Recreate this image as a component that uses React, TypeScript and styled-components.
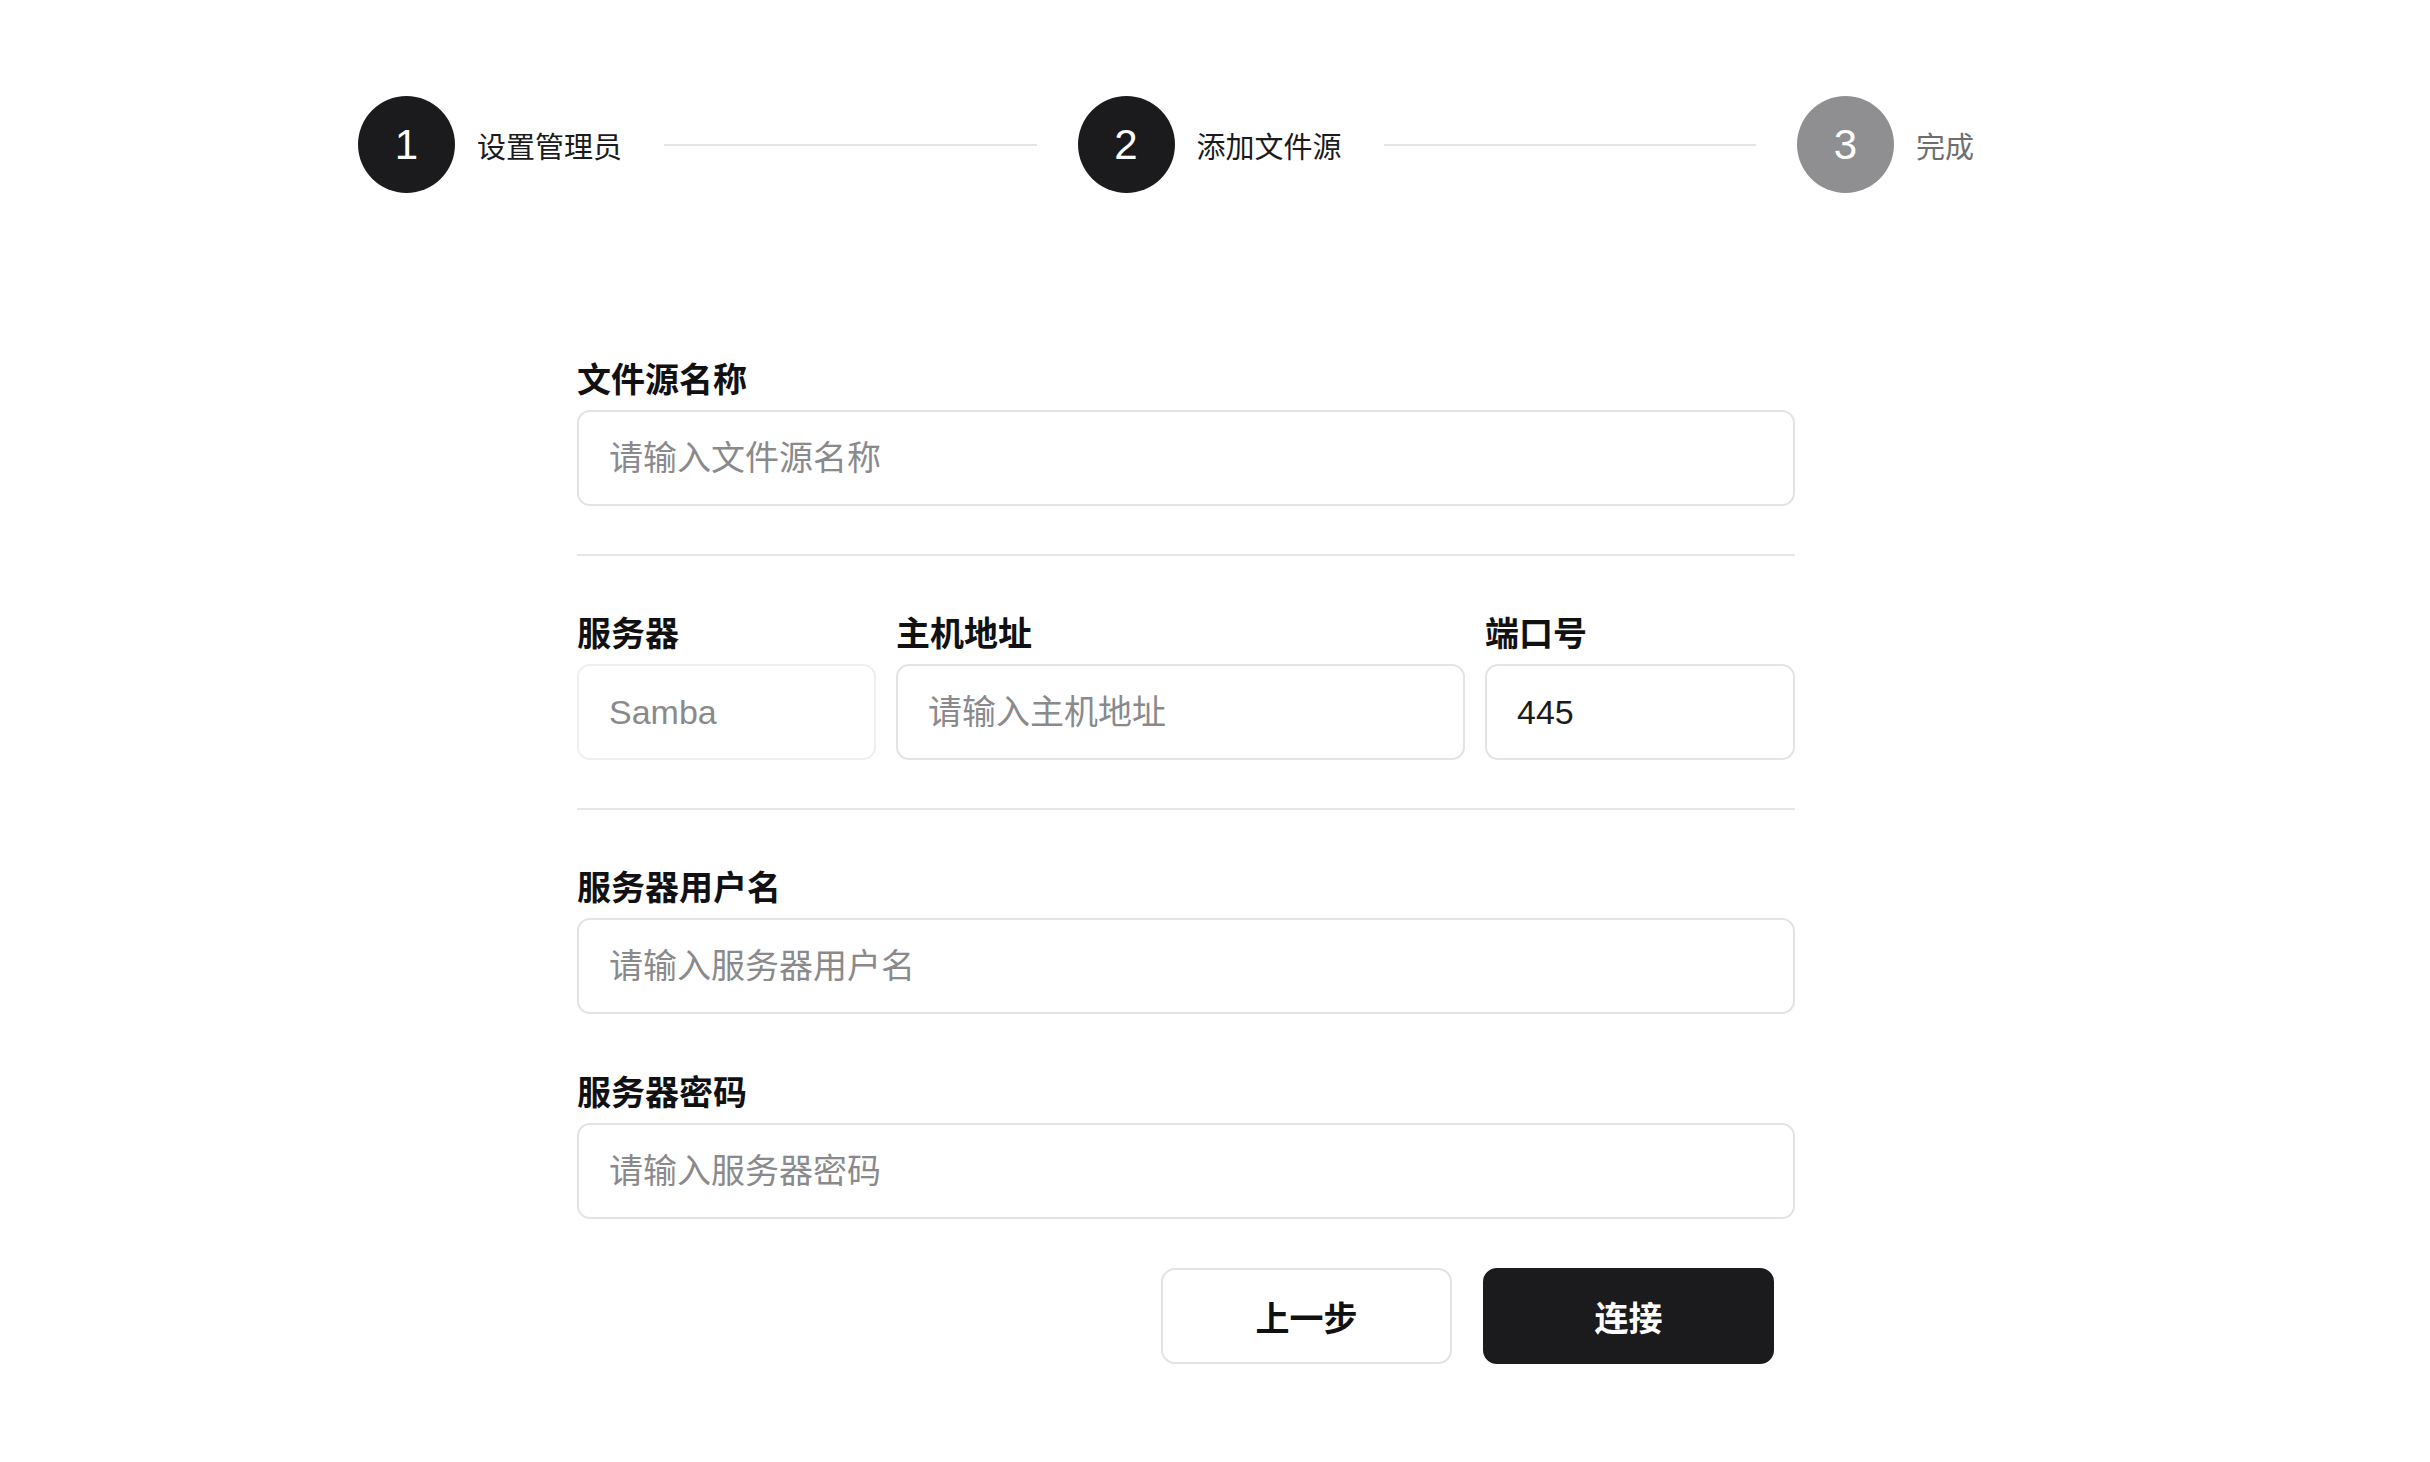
import styled, { createGlobalStyle } from 'styled-components';

const GlobalStyle = createGlobalStyle`
  * {
    box-sizing: border-box;
  }
  body {
    margin: 0;
    background: #ffffff;
    font-family: "Liberation Sans", "Noto Sans CJK SC", sans-serif;
    color: #1b1b1d;
  }
`;

interface StepProps {
  index: number;
  label: string;
  active: boolean;
  last?: boolean;
}

const Step = ({ index, label, active, last }: StepProps) => (
  <StepItem $last={last}>
    <Circle $active={active}>{index}</Circle>
    <StepLabel $active={active}>{label}</StepLabel>
    {!last && <StepLine />}
  </StepItem>
);

const App = () => {
  return (
    <>
      <GlobalStyle />
      <Page>
        <Stepper>
          <Step index={1} label="设置管理员" active />
          <Step index={2} label="添加文件源" active />
          <Step index={3} label="完成" active={false} last />
        </Stepper>

        <Form>
          <Field>
            <Label>文件源名称</Label>
            <Input placeholder="请输入文件源名称" />
          </Field>

          <Divider />

          <Row>
            <Field $width="299px">
              <Label>服务器</Label>
              <Input value="Samba" disabled readOnly />
            </Field>
            <Field $grow>
              <Label>主机地址</Label>
              <Input placeholder="请输入主机地址" />
            </Field>
            <Field $width="310px">
              <Label>端口号</Label>
              <Input defaultValue="445" />
            </Field>
          </Row>

          <Divider />

          <Field>
            <Label>服务器用户名</Label>
            <Input placeholder="请输入服务器用户名" />
          </Field>

          <Field $spaced>
            <Label>服务器密码</Label>
            <Input placeholder="请输入服务器密码" />
          </Field>

          <Actions>
            <Button>上一步</Button>
            <Button $primary>连接</Button>
          </Actions>
        </Form>
      </Page>
    </>
  );
};

export default App;

const Page = styled.div`
  width: 2430px;
  min-height: 1462px;
  padding-top: 96px;
`;

const Stepper = styled.div`
  display: flex;
  align-items: center;
  width: 1616px;
  margin-left: 358px;
`;

const StepItem = styled.div<{ $last?: boolean }>`
  display: flex;
  align-items: center;
  flex: ${(p) => (p.$last ? '0 0 175px' : '1 1 0')};
`;

const Circle = styled.div<{ $active: boolean }>`
  width: 97px;
  height: 97px;
  flex-shrink: 0;
  border-radius: 50%;
  background: ${(p) => (p.$active ? '#1b1b1d' : '#8f8f91')};
  color: #ffffff;
  display: flex;
  align-items: center;
  justify-content: center;
  font-size: 42px;
  line-height: 1;
`;

const StepLabel = styled.span<{ $active: boolean }>`
  margin-left: 22px;
  font-size: 29px;
  white-space: nowrap;
  color: ${(p) => (p.$active ? '#1b1b1d' : '#6e6e70')};
`;

const StepLine = styled.div`
  flex: 1;
  height: 2px;
  background: #e4e4e6;
  margin: 0 41px 0 42px;
`;

const Form = styled.div`
  width: 1218px;
  margin-left: 577px;
  margin-top: 165px;
  display: flex;
  flex-direction: column;
`;

const Field = styled.div<{ $width?: string; $grow?: boolean; $spaced?: boolean }>`
  display: flex;
  flex-direction: column;
  width: ${(p) => p.$width ?? 'auto'};
  flex: ${(p) => (p.$grow ? '1 1 0' : '0 0 auto')};
  margin-top: ${(p) => (p.$spaced ? '57px' : '0')};
`;

const Label = styled.label`
  font-size: 34px;
  line-height: 44px;
  font-weight: 700;
  margin-bottom: 8px;
  color: #111113;
`;

const Input = styled.input`
  width: 100%;
  height: 96px;
  padding: 0 30px;
  border: 2px solid #e3e3e5;
  border-radius: 13px;
  background: #ffffff;
  font-family: "Liberation Sans", "Noto Sans CJK SC", sans-serif;
  font-size: 34px;
  color: #1b1b1d;
  outline: none;

  &::placeholder {
    color: #8a8a8c;
  }

  &:disabled {
    border-color: #efeff0;
    color: #8a8a8c;
    -webkit-text-fill-color: #8a8a8c;
    opacity: 1;
  }
`;

const Row = styled.div`
  display: flex;
  gap: 20px;
`;

const Divider = styled.div`
  height: 2px;
  background: #e6e6e8;
  margin: 48px 0 56px;
`;

const Actions = styled.div`
  display: flex;
  justify-content: flex-end;
  gap: 31px;
  margin-top: 49px;
  padding-right: 21px;
`;

const Button = styled.button<{ $primary?: boolean }>`
  width: 291px;
  height: 96px;
  border-radius: 14px;
  border: 2px solid ${(p) => (p.$primary ? '#1b1b1d' : '#e3e3e5')};
  background: ${(p) => (p.$primary ? '#1b1b1d' : '#ffffff')};
  color: ${(p) => (p.$primary ? '#ffffff' : '#111113')};
  font-family: "Liberation Sans", "Noto Sans CJK SC", sans-serif;
  font-size: 34px;
  font-weight: 700;
  cursor: pointer;
`;
